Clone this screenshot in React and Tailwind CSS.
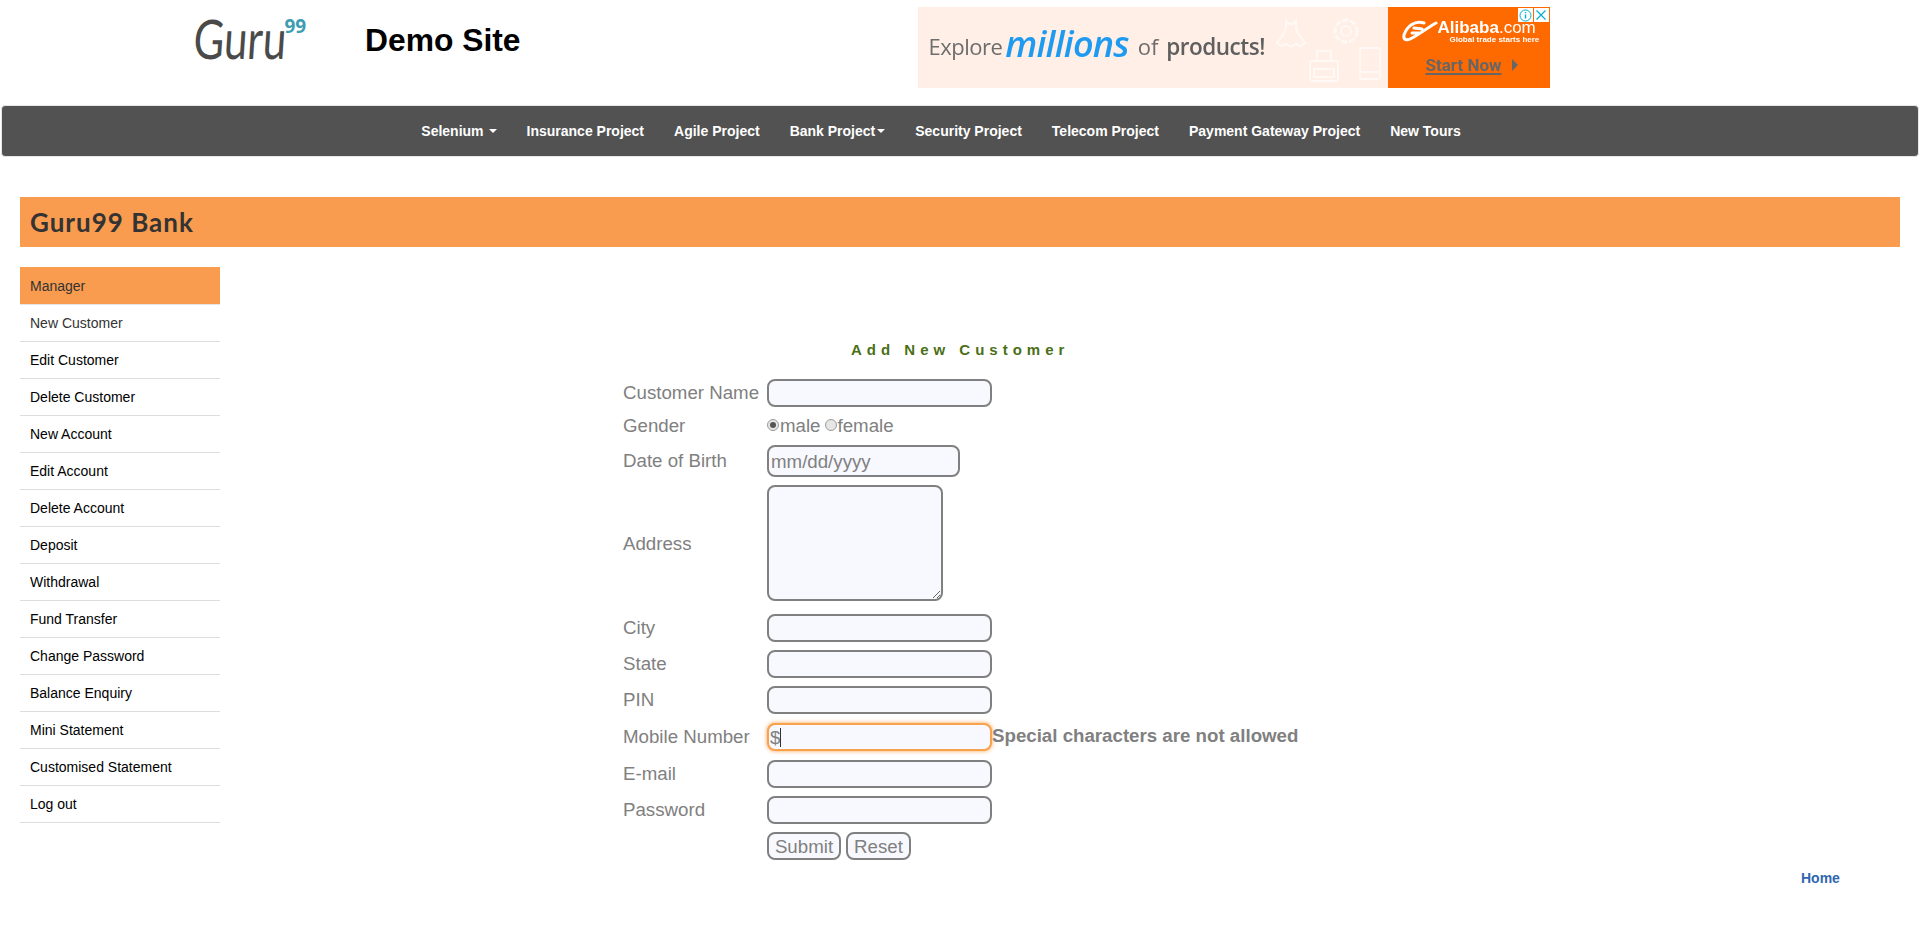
import React from 'react';

const navItems = [
    { label: 'Selenium', caret: 'wide' },
    { label: 'Insurance Project' },
    { label: 'Agile Project' },
    { label: 'Bank Project', caret: 'tight' },
    { label: 'Security Project' },
    { label: 'Telecom Project' },
    { label: 'Payment Gateway Project' },
    { label: 'New Tours' },
];

const menuItems = [
    'New Customer',
    'Edit Customer',
    'Delete Customer',
    'New Account',
    'Edit Account',
    'Delete Account',
    'Deposit',
    'Withdrawal',
    'Fund Transfer',
    'Change Password',
    'Balance Enquiry',
    'Mini Statement',
    'Customised Statement',
    'Log out',
];

const inputClass = 'block w-[225px] h-[28px] rounded-[8px] border-2 border-[#808080] bg-[#f8f8ff] outline-none';

const Caret = ({ className }) => (
    <span className={`inline-block w-0 h-0 border-x-[4px] border-x-transparent border-t-[4px] border-t-white ${className}`} />
);

const Row = ({ label, className, labelClass = 'pb-[2px]', children }) => (
    <div className={`flex items-center ${className}`}>
        <span className={`w-[144px] shrink-0 ${labelClass}`}>{label}</span>
        {children}
    </div>
);

const Radio = ({ checked }) => (
    <span className="inline-flex w-[12px] h-[12px] items-center justify-center rounded-full border border-[#9a9a9a] bg-[#e6e6e6]">
        {checked && <span className="w-[6px] h-[6px] rounded-full bg-[#555]" />}
    </span>
);

const Ad = () => (
    <div className="flex ml-[397px] mt-[7px] w-[632px] h-[81px] font-['Open_Sans',sans-serif]">
        <div className="relative flex-1 flex items-center bg-[#ffefe7] pl-[11px] pb-[2px] overflow-hidden">
            <span className="text-[#6d6d6d] text-[22px] tracking-[-0.5px] blur-[0.4px]">Explore</span>
            <span className="text-[#1e9bf0] text-[36px] leading-[44px] italic font-semibold ml-[3px] mb-[5px] tracking-[-0.8px] blur-[0.4px]">millions</span>
            <span className="text-[#6d6d6d] text-[22px] ml-[9px] blur-[0.4px]">of</span>
            <span className="text-[#5f5f5f] text-[22.5px] font-semibold ml-[8px] tracking-[-0.5px] blur-[0.4px]">products!</span>
            <svg className="absolute left-[352px] top-0" width="118" height="81" viewBox="0 0 118 81" fill="none" stroke="#fff" strokeWidth="2" opacity="0.6">
                <path d="M16 14v7l-2 5-7 10 5 3 4-2 5 3 5-3 4 2 5-3-7-10-2-5v-7l-3 3h-4z" />
                <circle cx="76" cy="24" r="5" />
                <circle cx="76" cy="24" r="11" strokeDasharray="6 2" strokeWidth="3" />
                <rect x="40" y="54" width="28" height="20" rx="2" />
                <path d="M47 54v-10h14v10M44 62h20v8H44z" />
                <rect x="90" y="41" width="20" height="31" rx="1" />
                <path d="M90 65h20" />
            </svg>
        </div>
        <div className="relative w-[162px] bg-[#ff6a00] overflow-hidden">
            <div className="absolute right-[1px] top-[1px] flex h-[14px] gap-[1px]">
                <span className="flex w-[15px] items-center justify-center bg-white">
                    <svg width="13" height="13" viewBox="0 0 13 13" fill="none" stroke="#00aecd">
                        <circle cx="6.5" cy="6.5" r="5.5" />
                        <path d="M6.5 5.5v4M6.5 3v1.2" strokeWidth="1.4" />
                    </svg>
                </span>
                <span className="flex w-[15px] items-center justify-center bg-white">
                    <svg width="12" height="12" viewBox="0 0 12 12" fill="none" stroke="#00aecd" strokeWidth="1.2">
                        <path d="M1.5 1.5l9 9M10.5 1.5l-9 9" />
                    </svg>
                </span>
            </div>
            <svg className="absolute left-[14px] top-[12px]" width="36" height="24" viewBox="0 0 36 24" fill="none" stroke="#fff" strokeWidth="3" strokeLinecap="round">
                <path d="M22 4C13 1 5 7 2 16c-1 5 3 6 8 3 8-4 15-10 24-15M12 9l8 1M10 14l7 0" />
            </svg>
            <span className="absolute left-[50px] top-[11px] text-white text-[17px] leading-[20px] font-bold font-['Liberation_Sans',sans-serif] blur-[0.3px] whitespace-nowrap">Alibaba<span className="font-normal">.com</span></span>
            <span className="absolute left-[62px] top-[28px] text-white text-[8px] leading-[9px] font-bold font-['Liberation_Sans',sans-serif] whitespace-nowrap blur-[0.2px]">Global trade starts here</span>
            <div className="absolute left-[38px] top-[47px] flex items-center">
                <span className="text-[#666666] text-[17px] leading-[22px] font-bold underline decoration-2 underline-offset-2 font-['Roboto',sans-serif] blur-[0.3px] whitespace-nowrap">Start Now</span>
                <span className="ml-[10px] w-0 h-0 border-y-[6px] border-y-transparent border-l-[6px] border-l-[#666666]" />
            </div>
        </div>
    </div>
);

const App = () => {
    return (
        <div className="min-h-[935px] bg-white font-['Liberation_Sans',Arial,sans-serif]">
            <header className="flex h-[105px]">
                <div className="w-[195px] shrink-0" />
                <div className="flex items-start w-[170px] shrink-0">
                    <span className="inline-block mt-[22px] -ml-[3px] origin-bottom scale-y-[1.3] -skew-x-[5deg] text-[#4a4a4a] text-[42px] leading-[46px] font-['Lato',sans-serif] whitespace-nowrap">Guru</span>
                    <span className="mt-[15px] text-[#3d9db3] text-[19px] leading-[22px] font-bold font-['Open_Sans',sans-serif]">99</span>
                </div>
                <h1 className="mt-[21px] text-[31.8px] leading-[38px] font-bold text-black whitespace-nowrap">Demo Site</h1>
                <Ad />
            </header>

            <nav className="mx-[1px] h-[52px] pr-[38px] flex items-center justify-center rounded-[4px] border border-[#e7e7e7] bg-[#525252] text-[14px] font-bold text-white">
                {navItems.map((item) => (
                    <a key={item.label} className="flex items-center px-[15px] whitespace-nowrap">
                        {item.label}
                        {item.caret === 'wide' && <Caret className="ml-[5px]" />}
                        {item.caret === 'tight' && <Caret className="ml-[2px]" />}
                    </a>
                ))}
            </nav>

            <div className="mx-[20px] mt-[40px] h-[50px] flex items-center pl-[10px] bg-[#f99c50] text-[#333] text-[26px] tracking-[1px] font-bold font-['Lato',sans-serif]">
                Guru99 Bank
            </div>

            <div className="flex mt-[20px]">
                <aside className="ml-[20px] w-[200px] shrink-0 text-[14px] self-start">
                    <div className="h-[38px] pt-[1px] flex items-center pl-[10px] bg-[#f99c50] text-[#333] border-b border-[#e6e6e6]">Manager</div>
                    {menuItems.map((item) => (
                        <a key={item} className={`h-[37px] flex items-center pl-[10px] border-b border-[#dddddd] ${item === 'New Customer' ? 'text-[#333]' : 'text-black'}`}>
                            {item}
                        </a>
                    ))}
                </aside>

                <main className="relative flex-1 pl-[403px] text-[18.7px] leading-[21px] text-[#808080]">
                    <h2 className="mt-[72px] ml-[228px] h-[40px] text-[15px] font-bold tracking-[5px] text-[#4b6f17] whitespace-nowrap">Add New Customer</h2>
                    <Row label="Customer Name" className="h-[28px]"><input className={inputClass} /></Row>
                    <Row label="Gender" className="h-[20px] mt-[9px]">
                        <span className="flex items-center pb-[2px]">
                            <Radio checked /><span className="ml-px">male</span><span className="w-[4px]" /><Radio /><span className="ml-px">female</span>
                        </span>
                    </Row>
                    <Row label="Date of Birth" className="h-[32px] mt-[9px]">
                        <div className="w-[193px] h-[32px] flex items-center pl-[2px] rounded-[8px] border-2 border-[#808080] bg-[#f8f8ff]">mm/dd/yyyy</div>
                    </Row>
                    <Row label="Address" labelClass="" className="h-[116px] mt-[8px]">
                        <textarea className="block w-[176px] h-[116px] rounded-[8px] border-2 border-[#808080] bg-[#f8f8ff] outline-none" />
                    </Row>
                    <Row label="City" className="h-[28px] mt-[13px]"><input className={inputClass} /></Row>
                    <Row label="State" className="h-[28px] mt-[8px]"><input className={inputClass} /></Row>
                    <Row label="PIN" className="h-[28px] mt-[8px]"><input className={inputClass} /></Row>
                    <Row label="Mobile Number" className="h-[28px] mt-[9px]">
                        <div className="w-[225px] h-[28px] flex items-center pl-[1px] rounded-[8px] border-2 border-[#f9a24e] bg-[#f8f8ff] shadow-[0_0_4px_#f9a24e]">
                            $<span className="w-px h-[19px] bg-[#333]" />
                        </div>
                        <span className="font-bold whitespace-nowrap pb-[3px]">Special characters are not allowed</span>
                    </Row>
                    <Row label="E-mail" className="h-[28px] mt-[9px]"><input className={inputClass} /></Row>
                    <Row label="Password" className="h-[28px] mt-[8px]"><input className={inputClass} /></Row>
                    <div className="flex gap-[5px] mt-[8px] ml-[144px]">
                        <button className="h-[28px] w-[74px] rounded-[8px] border-2 border-[#808080] bg-[#f8f8ff]">Submit</button>
                        <button className="h-[28px] w-[65px] rounded-[8px] border-2 border-[#808080] bg-[#f8f8ff]">Reset</button>
                    </div>
                    <a className="absolute left-[1581px] top-[603px] text-[14px] leading-[16px] font-bold text-[#2f66b0]">Home</a>
                </main>
            </div>
        </div>
    );
};

export default App;
